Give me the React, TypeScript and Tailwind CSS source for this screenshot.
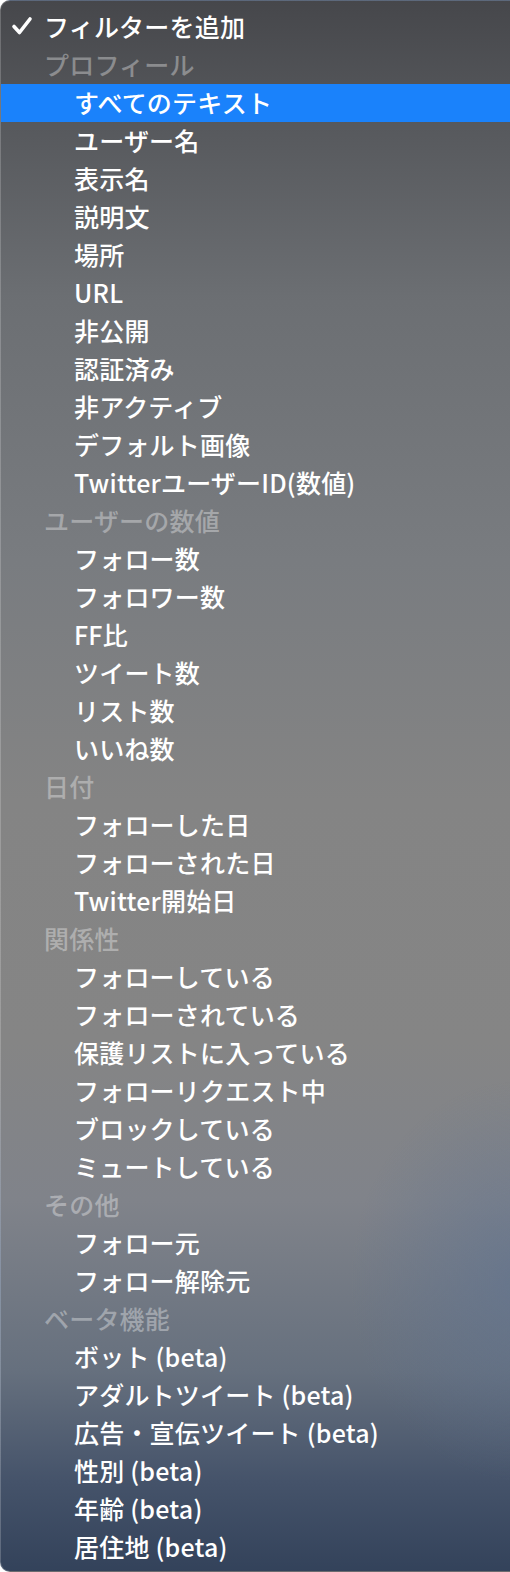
import React from 'react'

type Row = { label: string; kind: 'title' | 'group' | 'item'; selected?: boolean }

const rows: Row[] = [
  { label: 'フィルターを追加', kind: 'title' },
  { label: 'プロフィール', kind: 'group' },
  { label: 'すべてのテキスト', kind: 'item', selected: true },
  { label: 'ユーザー名', kind: 'item' },
  { label: '表示名', kind: 'item' },
  { label: '説明文', kind: 'item' },
  { label: '場所', kind: 'item' },
  { label: 'URL', kind: 'item' },
  { label: '非公開', kind: 'item' },
  { label: '認証済み', kind: 'item' },
  { label: '非アクティブ', kind: 'item' },
  { label: 'デフォルト画像', kind: 'item' },
  { label: 'TwitterユーザーID(数値)', kind: 'item' },
  { label: 'ユーザーの数値', kind: 'group' },
  { label: 'フォロー数', kind: 'item' },
  { label: 'フォロワー数', kind: 'item' },
  { label: 'FF比', kind: 'item' },
  { label: 'ツイート数', kind: 'item' },
  { label: 'リスト数', kind: 'item' },
  { label: 'いいね数', kind: 'item' },
  { label: '日付', kind: 'group' },
  { label: 'フォローした日', kind: 'item' },
  { label: 'フォローされた日', kind: 'item' },
  { label: 'Twitter開始日', kind: 'item' },
  { label: '関係性', kind: 'group' },
  { label: 'フォローしている', kind: 'item' },
  { label: 'フォローされている', kind: 'item' },
  { label: '保護リストに入っている', kind: 'item' },
  { label: 'フォローリクエスト中', kind: 'item' },
  { label: 'ブロックしている', kind: 'item' },
  { label: 'ミュートしている', kind: 'item' },
  { label: 'その他', kind: 'group' },
  { label: 'フォロー元', kind: 'item' },
  { label: 'フォロー解除元', kind: 'item' },
  { label: 'ベータ機能', kind: 'group' },
  { label: 'ボット (beta)', kind: 'item' },
  { label: 'アダルトツイート (beta)', kind: 'item' },
  { label: '広告・宣伝ツイート (beta)', kind: 'item' },
  { label: '性別 (beta)', kind: 'item' },
  { label: '年齢 (beta)', kind: 'item' },
  { label: '居住地 (beta)', kind: 'item' },
]

const Check = () => (
  <svg width="22" height="20" viewBox="0 0 22 20" className="absolute left-[10px] top-[8px]">
    <path d="M3 10.5 L8.5 16.5 L19 3" fill="none" stroke="white" strokeWidth="3.6" strokeLinecap="round" strokeLinejoin="round" />
  </svg>
)

export default function App() {
  return (
    <div className="w-[510px] h-[1572px] overflow-hidden">
      <div className="relative h-full rounded-l-[10px] border-l border-t border-b border-white/20 bg-[radial-gradient(ellipse_170px_200px_at_520px_1280px,rgba(95,115,145,0.6),rgba(95,115,145,0)),linear-gradient(to_bottom,#46474b_0px,#55575b_110px,#6c6f73_300px,#797c80_560px,#848484_800px,#858585_1040px,#80838a_1200px,#66707e_1370px,#45536a_1480px,#33425a_1572px)] pt-[7px] font-['Noto_Sans_CJK_JP','Noto_Sans',sans-serif] text-[25px] font-medium tracking-[0.2px]">
        {rows.map((r, i) => (
          <div
            key={i}
            className={
              'relative h-[38px] flex items-center pb-[2px] whitespace-nowrap leading-none ' +
              (r.kind === 'title' ? 'pl-[43px] text-white ' : '') +
              (r.kind === 'group' ? 'pl-[43px] text-white/35 ' : '') +
              (r.kind === 'item' ? 'pl-[73px] text-white ' : '') +
              (r.selected ? 'bg-[#1a82fb] ' : '')
            }
          >
            {r.kind === 'title' && <Check />}
            {r.label}
          </div>
        ))}
      </div>
    </div>
  )
}
